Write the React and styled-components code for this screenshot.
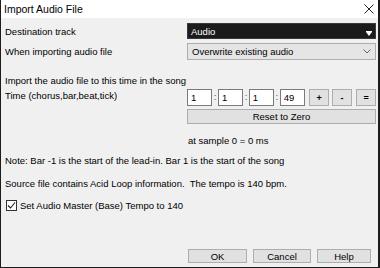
import styled, { createGlobalStyle } from 'styled-components'

const GlobalStyle = createGlobalStyle`
  html, body {
    margin: 0;
    padding: 0;
    background: #ffffff;
  }
  body {
    font-family: "Liberation Sans", Arial, sans-serif;
  }
`

const Dialog = styled.div`
  width: 380px;
  height: 268px;
  box-sizing: border-box;
  border: 1px solid #1c1c1c;
  border-top: none;
  border-right-width: 2px;
  display: flex;
  flex-direction: column;
  background: #f0f0f0;
  overflow: hidden;
`

const TitleBar = styled.div`
  height: 18px;
  flex: none;
  background: #ffffff;
  display: flex;
  align-items: center;
  justify-content: space-between;
  padding: 0 4px 0 3px;
  font-size: 10.5px;
  color: #000;
`

const Body = styled.div`
  flex: 1;
  display: flex;
  flex-direction: column;
  padding: 5px 0 0 4px;
  font-size: 9.5px;
  color: #000;
`

const Row = styled.div`
  display: grid;
  grid-template-columns: 182px 189px;
  align-items: center;
  height: ${(p) => p.h || 17}px;
  margin-top: ${(p) => p.mt || 0}px;
`

const Line = styled.div`
  height: ${(p) => p.h || 14}px;
  display: flex;
  align-items: center;
  margin-top: ${(p) => p.mt || 0}px;
  padding-left: ${(p) => p.indent || 0}px;
  white-space: pre;
`

const DarkSelect = styled.div`
  height: 16px;
  box-sizing: border-box;
  background: #1b1b1b;
  border: 1px solid #3a3a3a;
  color: #fff;
  display: flex;
  align-items: center;
  justify-content: space-between;
  padding: 0 3px 0 3px;

  svg {
    align-self: flex-end;
    margin-bottom: 2px;
  }
`

const LightSelect = styled.div`
  height: 17px;
  box-sizing: border-box;
  background: #e5e5e5;
  border: 1px solid #adadad;
  display: flex;
  align-items: center;
  justify-content: space-between;
  padding: 0 4px 0 4px;
`

const TimeGroup = styled.div`
  display: flex;
  flex-direction: column;
  gap: 3px;
`

const TimeFields = styled.div`
  display: flex;
  align-items: center;
  height: 17px;
`

const Field = styled.div`
  width: 27px;
  height: 17px;
  box-sizing: border-box;
  border: 1px solid #7a7a7a;
  background: #fff;
  display: flex;
  align-items: center;
  padding-left: 3px;
`

const Colon = styled.span`
  width: 6px;
  text-align: center;
  color: #555;
  margin-top: -3px;
`

const SmallButton = styled.div`
  flex: none;
  width: 20px;
  height: 17px;
  box-sizing: border-box;
  border: 1px solid #adadad;
  background: #e1e1e1;
  margin-left: ${(p) => p.ml || 3}px;
  display: flex;
  align-items: center;
  justify-content: center;
  font-size: 9px;
  font-weight: bold;
`

const WideButton = styled.div`
  height: 15px;
  box-sizing: border-box;
  border: 1px solid #adadad;
  background: #e1e1e1;
  display: flex;
  align-items: center;
  justify-content: center;
`

const CheckRow = styled.div`
  display: flex;
  align-items: center;
  gap: 3px;
  height: 14px;
  margin-top: ${(p) => p.mt || 0}px;
  padding-left: 1px;
`

const Box = styled.div`
  width: 11px;
  height: 11px;
  box-sizing: border-box;
  border: 1px solid #333;
  background: #fff;
  display: flex;
  align-items: center;
  justify-content: center;
`

const Footer = styled.div`
  margin-top: auto;
  display: flex;
  justify-content: flex-end;
  gap: 6px;
  padding: 0 7px 4px 0;
`

const DialogButton = styled.div`
  width: ${(p) => p.w || 58}px;
  height: 14px;
  box-sizing: border-box;
  border: 1px solid #adadad;
  background: #e1e1e1;
  display: flex;
  align-items: center;
  justify-content: center;
`

export default function App() {
  return (
    <>
      <GlobalStyle />
      <Dialog>
        <TitleBar>
          <span>Import Audio File</span>
          <svg width="10" height="10" viewBox="0 0 10 10">
            <path d="M0.5 0.5 L9.5 9.5 M9.5 0.5 L0.5 9.5" stroke="#222" strokeWidth="1" />
          </svg>
        </TitleBar>
        <Body>
          <Row h={16}>
            <span>Destination track</span>
            <DarkSelect>
              <span>Audio</span>
              <svg width="6" height="5" viewBox="0 0 6 5">
                <path d="M0 0 H6 V1 L3 5 L0 1 Z" fill="#fff" />
              </svg>
            </DarkSelect>
          </Row>
          <Row h={17} mt={4}>
            <span>When importing audio file</span>
            <LightSelect>
              <span>Overwrite existing audio</span>
              <svg width="8" height="5" viewBox="0 0 8 5">
                <path d="M0.5 0.5 L4 4 L7.5 0.5" stroke="#666" fill="none" />
              </svg>
            </LightSelect>
          </Row>
          <Line mt={13}>Import the audio file to this time in the song</Line>
          <Row h={35} mt={2}>
            <span style={{ alignSelf: 'start', marginTop: 1 }}>Time (chorus,bar,beat,tick)</span>
            <TimeGroup>
              <TimeFields>
                <Field>1</Field>
                <Colon>:</Colon>
                <Field>1</Field>
                <Colon>:</Colon>
                <Field>1</Field>
                <Colon>:</Colon>
                <Field>49</Field>
                <SmallButton ml={4}>+</SmallButton>
                <SmallButton>-</SmallButton>
                <SmallButton ml={4}>=</SmallButton>
              </TimeFields>
              <WideButton>Reset to Zero</WideButton>
            </TimeGroup>
          </Row>
          <Line mt={9} indent={183}>at sample 0 = 0 ms</Line>
          <Line mt={6}>Note: Bar -1 is the start of the lead-in. Bar 1 is the start of the song</Line>
          <Line mt={9}>Source file contains Acid Loop information.  The tempo is 140 bpm.</Line>
          <CheckRow mt={8}>
            <Box>
              <svg width="9" height="9" viewBox="0 0 9 9">
                <path d="M1 4.5 L3.5 7 L8 1.5" stroke="#222" strokeWidth="1.1" fill="none" />
              </svg>
            </Box>
            <span>Set Audio Master (Base) Tempo to 140</span>
          </CheckRow>
          <Footer>
            <DialogButton w={59}>OK</DialogButton>
            <DialogButton w={58}>Cancel</DialogButton>
            <DialogButton w={54}>Help</DialogButton>
          </Footer>
        </Body>
      </Dialog>
    </>
  )
}
